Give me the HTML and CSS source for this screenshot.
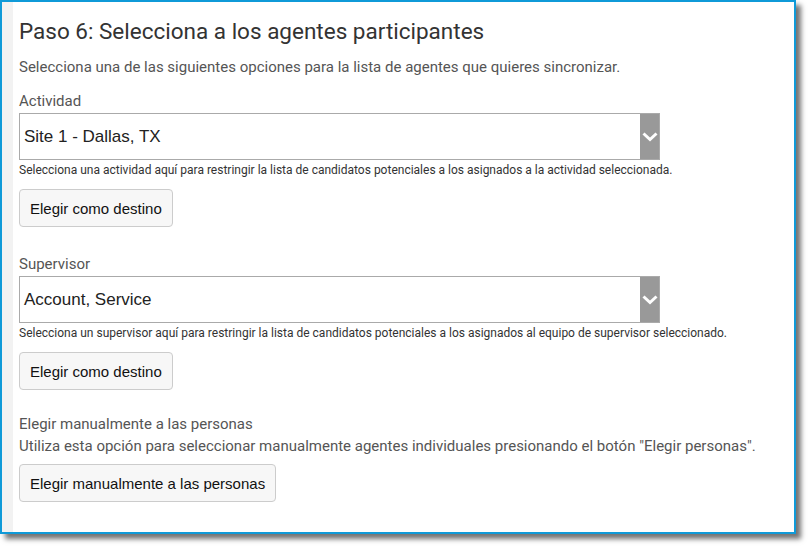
FILE: index.html
```html
<!DOCTYPE html>
<html lang="es">
<head>
<meta charset="utf-8">
<title>Paso 6</title>
<link rel="stylesheet" href="styles.css">
</head>
<body>
<div class="frame">
  <div class="strip"></div>
  <div class="content">
    <h1 class="title">Paso 6: Selecciona a los agentes participantes</h1>
    <p class="intro">Selecciona una de las siguientes opciones para la lista de agentes que quieres sincronizar.</p>

    <div class="field">
      <div class="label">Actividad</div>
      <div class="select">
        <span class="select-value">Site 1 - Dallas, TX</span>
        <span class="select-arrow"><svg width="16" height="10" viewBox="0 0 16 10"><path d="M1.5 1.5 L8 7.5 L14.5 1.5" fill="none" stroke="#fff" stroke-width="3"/></svg></span>
      </div>
      <div class="help">Selecciona una actividad aquí para restringir la lista de candidatos potenciales a los asignados a la actividad seleccionada.</div>
      <button class="btn">Elegir como destino</button>
    </div>

    <div class="field second">
      <div class="label">Supervisor</div>
      <div class="select">
        <span class="select-value">Account, Service</span>
        <span class="select-arrow"><svg width="16" height="10" viewBox="0 0 16 10"><path d="M1.5 1.5 L8 7.5 L14.5 1.5" fill="none" stroke="#fff" stroke-width="3"/></svg></span>
      </div>
      <div class="help">Selecciona un supervisor aquí para restringir la lista de candidatos potenciales a los asignados al equipo de supervisor seleccionado.</div>
      <button class="btn">Elegir como destino</button>
    </div>

    <div class="field third">
      <div class="label">Elegir manualmente a las personas</div>
      <div class="desc">Utiliza esta opción para seleccionar manualmente agentes individuales presionando el botón "Elegir personas".</div>
      <button class="btn btn-manual">Elegir manualmente a las personas</button>
    </div>
  </div>
</div>
</body>
</html>
```

FILE: styles.css
```css
html, body {
  margin: 0;
  padding: 0;
  background: #ffffff;
}
body {
  font-family: Roboto, "Liberation Sans", sans-serif;
  width: 810px;
  height: 547px;
  overflow: hidden;
}
.frame {
  display: flex;
  width: 796px;
  height: 534px;
  box-sizing: border-box;
  border: 2px solid #0f9ad8;
  background: #ffffff;
  box-shadow: 5px 5px 5px rgba(0, 0, 0, 0.55);
}
.strip {
  width: 11px;
  flex: none;
  background: #f2f2f2;
}
.content {
  flex: 1;
  padding: 15px 0 0 6px;
}
.title {
  margin: 0;
  font-size: 22.5px;
  font-weight: 400;
  line-height: 28px;
  color: #333333;
}
.intro {
  margin: 12px 0 0 0;
  font-size: 15px;
  line-height: 20px;
  color: #555555;
}
.field {
  margin-top: 14px;
}
.label {
  font-size: 15px;
  line-height: 20px;
  color: #555555;
}
.select {
  margin-top: 2px;
  display: flex;
  width: 641px;
  height: 47px;
  box-sizing: border-box;
  border: 1px solid #aaaaaa;
  background: #ffffff;
}
.select-value {
  flex: 1;
  display: flex;
  align-items: center;
  padding-left: 4px;
  font-family: "Liberation Sans", Arial, sans-serif;
  font-size: 17px;
  color: #222222;
}
.select-arrow {
  width: 19px;
  flex: none;
  display: flex;
  align-items: center;
  justify-content: center;
  background: #999999;
}
.help {
  margin-top: 2px;
  font-size: 12px;
  line-height: 16px;
  color: #333333;
}
.btn {
  display: block;
  margin-top: 11px;
  height: 38px;
  padding: 0 10px;
  box-sizing: border-box;
  border: 1px solid #cccccc;
  border-radius: 4px;
  background: #f7f7f7;
  font-family: "Liberation Sans", Arial, sans-serif;
  font-size: 15px;
  color: #111111;
}
.second {
  margin-top: 27px;
}
.third {
  margin-top: 24px;
}
.desc {
  margin-top: 2px;
  font-size: 15px;
  line-height: 20px;
  color: #555555;
}
.btn-manual {
  margin-top: 8px;
}
```
